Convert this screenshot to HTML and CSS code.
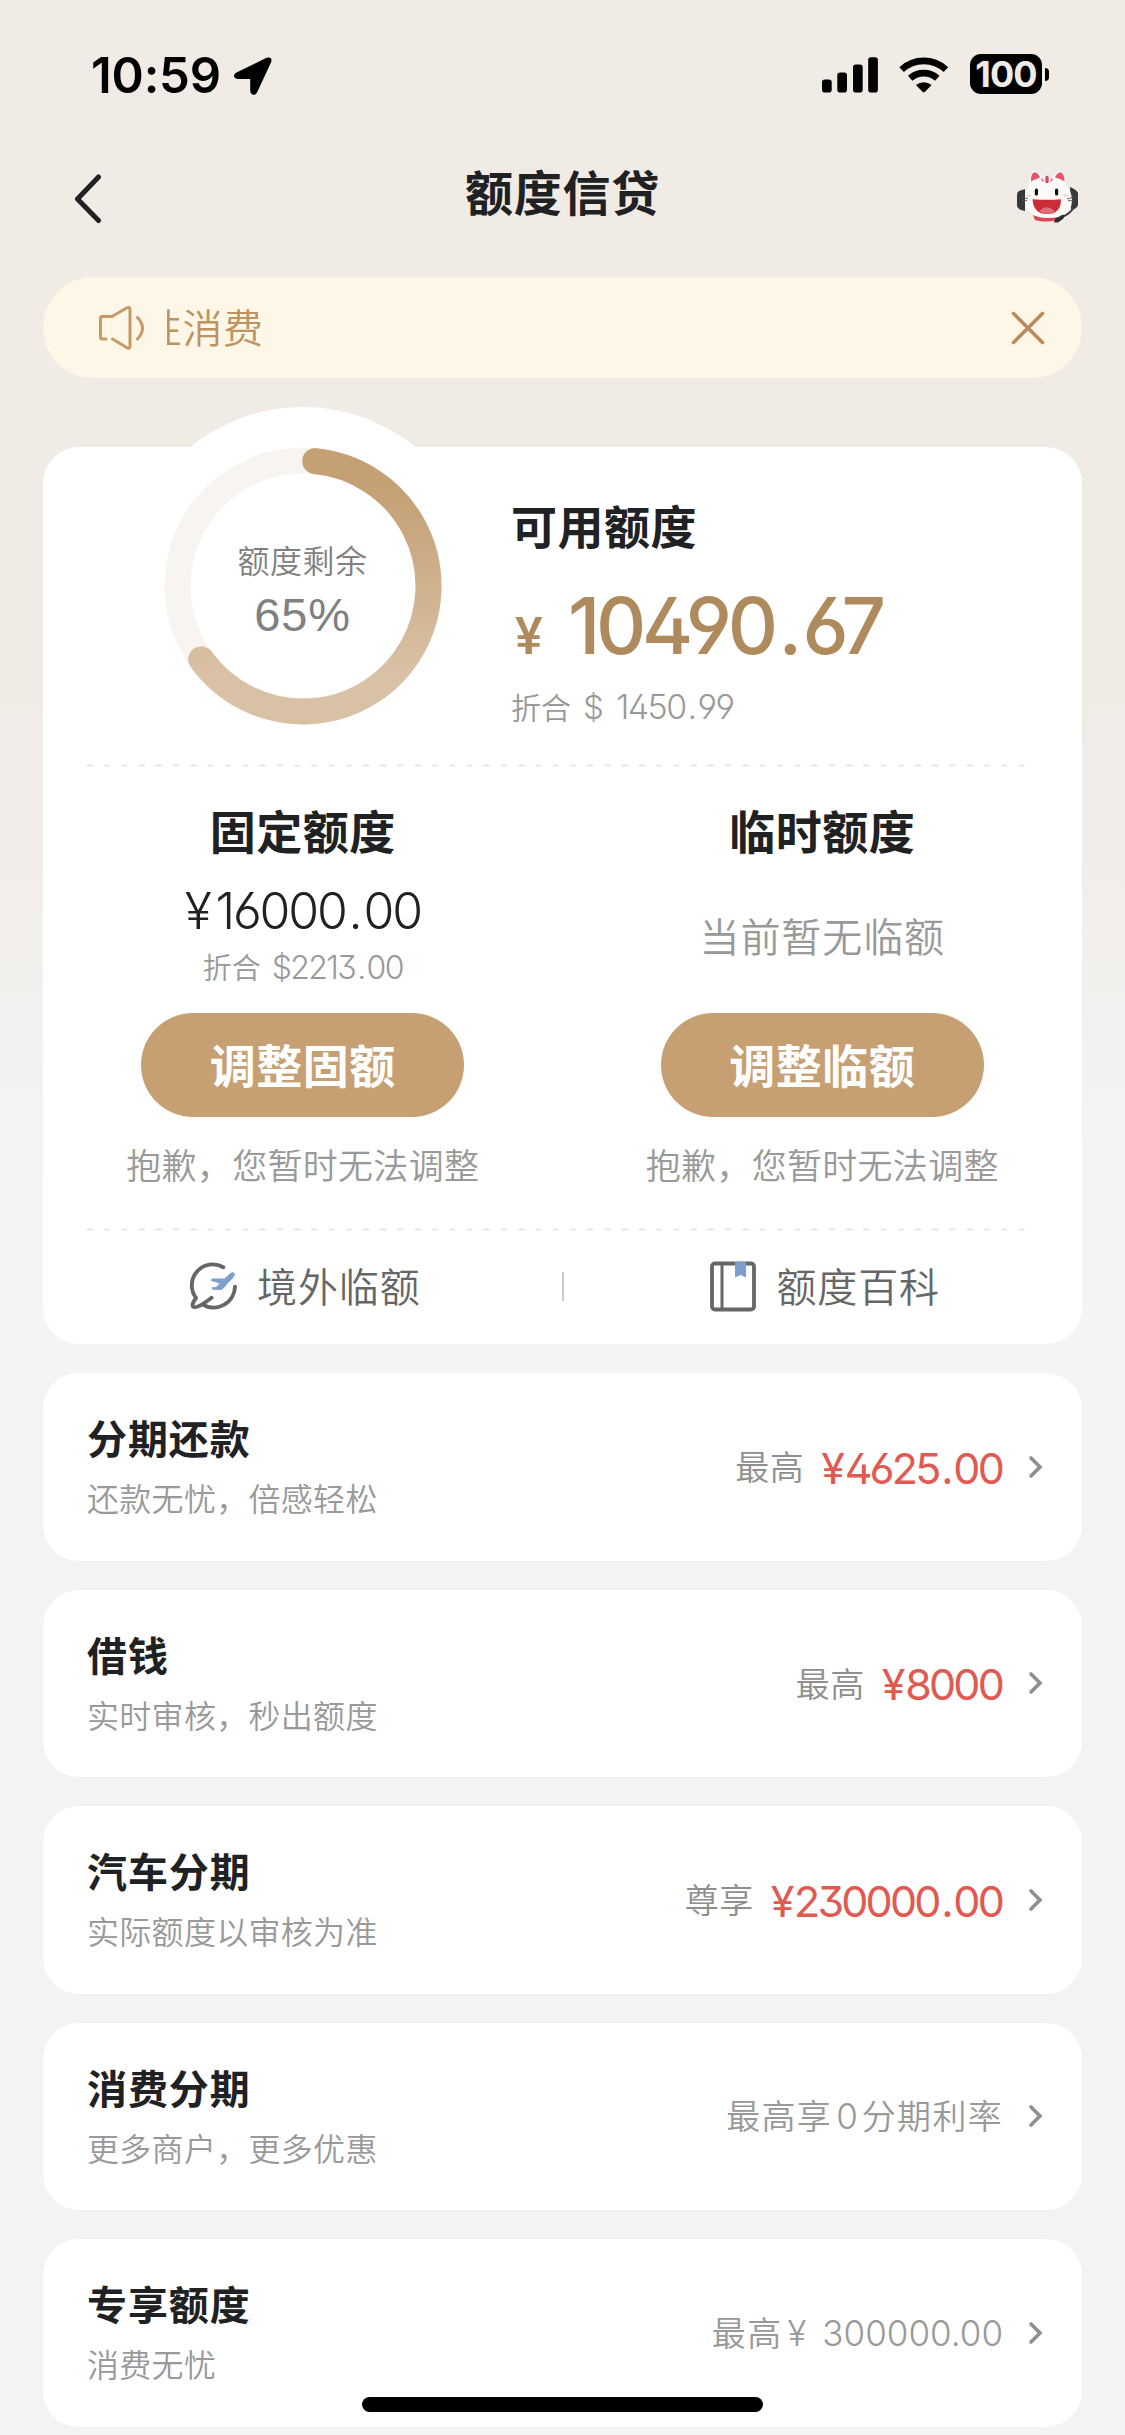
FILE: index.html
```html
<!DOCTYPE html>
<html lang="zh-CN">
<head>
<meta charset="utf-8">
<title>额度信贷</title>
<link rel="stylesheet" href="styles.css">
</head>
<body>
<div class="screen">
  <header class="status">
    <span class="clock">10:59</span>
    <svg class="locate" width="38" height="38" viewBox="0 0 38 38"><path d="M2.500 15.500 L32.500 0.800 Q38.500 -1 37.200 5 L23 35.500 Q21.300 38.500 18.500 37.500 Q16.200 36.500 16.200 33.500 L16.200 22 L4 22 Q0 21.500 0 18.800 Q0 16.800 2.500 15.500Z"/></svg>
    <svg class="signal" width="56" height="36" viewBox="0 0 56 36"><rect x="0" y="22.500" width="9.700" height="13" rx="2.800"/><rect x="15.300" y="15.500" width="9.700" height="20" rx="2.800"/><rect x="31" y="7.500" width="9.700" height="28" rx="2.800"/><rect x="46.200" y="0.300" width="9.700" height="35.200" rx="2.800"/></svg>
    <svg class="wifi" width="50" height="36" viewBox="0 0 50 36"><g fill="none" stroke="#000" stroke-width="6.600"><path d="M2.600 12.600 A32.500 32.500 0 0 1 46.900 12.600"/><path d="M11.200 21.200 A20.500 20.500 0 0 1 38.300 21.200"/></g><path d="M16.900 28 A12.200 12.200 0 0 1 32.600 28 L26 34.700 Q24.700 35.900 23.500 34.700Z"/></svg>
    <span class="battery">100</span>
    <i class="nub"></i>
  </header>

  <nav class="navbar">
    <svg class="back" width="28" height="50" viewBox="0 0 28 50"><path d="M24.500 3 L3.500 25 L24.500 46.500" fill="none" stroke="#202123" stroke-width="5" stroke-linecap="round" stroke-linejoin="round"/></svg>
    <h1>额度信贷</h1>
    <svg class="cat" width="62" height="54" viewBox="0 0 62 54">
      <path d="M8 18 L2 20 Q0 21 0 24 V35 Q1 39 8 40Z M53 16 Q60 19 61 22 V34 Q60 38 54 39Z" fill="#37393b"/>
      <path d="M57 36 Q53 43 45 46" fill="none" stroke="#37393b" stroke-width="1.800"/>
      <path d="M16 44 Q29 48 42 44 L40 49 Q29 52 18 49Z" fill="#df4455"/>
      <path d="M12 14 Q12 0 18 0 Q22 1 25 6 Q31 4.500 36 6 Q39 1 43 0 Q49 1 49 14 Q55 21 55 30 Q54 47 31 47 Q9 47 8 30 Q8 21 12 14Z" fill="#fcfaf9"/>
      <path d="M14 10.500 Q13.500 1.500 18 1.200 Q21 1.500 23 6.500 Q17.500 8.500 14 10.500Z M38 6.500 Q40 1.500 43.500 1.200 Q47.500 2 47.500 10.500 Q43 7.500 38 6.500Z" fill="#e5566b"/>
      <path d="M30 6.500 V10.500" stroke="#df4a5e" stroke-width="3.400" stroke-linecap="round"/>
      <path d="M24.800 8 L26.200 10 M35.200 8 L33.800 10" stroke="#e8798a" stroke-width="1.600" stroke-linecap="round"/>
      <rect x="17.800" y="17.500" width="3.200" height="7" rx="1.600" fill="#111"/><rect x="38" y="17.500" width="3.200" height="7" rx="1.600" fill="#111"/>
      <path d="M15.500 28.200 Q30 29.500 44 28.200 Q44 43 30 43 Q16.500 43 15.500 28.200Z" fill="#cb2d36"/>
      <path d="M22 40.500 Q29.500 32 38 40.500 Q30 45 22 40.500Z" fill="#df6f7a"/>
      <path d="M10 25 L14 24 M46.500 24 L51 25" stroke="#f7c9d0" stroke-width="1.800"/>
      <path d="M5 26 L11 28 M5 30 L10 29.500 M57 26 L50 28 M57 30 L51 29.500" stroke="#555" stroke-width="0.900"/>
      <path d="M38 48 L45 44 Q50 43 46 48 L41 51.500 L37 51.500Z" fill="#2c2d2f"/>
    </svg>
  </nav>

  <section class="notice">
    <svg class="horn" width="48" height="46" viewBox="0 0 48 46"><g fill="none" stroke="#c69a67" stroke-width="3" stroke-linecap="round" stroke-linejoin="round"><path d="M8 34 H4.500 Q2.500 34 2.500 32 V13.500 Q2.500 11.500 4.500 11.500 H14 L29 2.800 Q32 1.500 32 4.500 V41 Q32 44.500 29 42.800 L14.500 34"/><path d="M39.500 12.500 Q49.500 23 39.500 34"/></g></svg>
    <div class="ticker"><span>性消费</span></div>
    <svg class="close" width="36" height="36" viewBox="0 0 36 36"><path d="M3.500 3.500 L32.500 32.500 M32.500 3.500 L3.500 32.500" stroke="#b98b5c" stroke-width="3.600" stroke-linecap="round"/></svg>
  </section>

  <main class="quota">
    <i class="halo"></i>
    <div class="summary">
      <div class="gauge">
        <svg width="278" height="278" viewBox="0 0 278 278">
          <defs><linearGradient id="gold" gradientUnits="userSpaceOnUse" x1="0" y1="40" x2="0" y2="225"><stop offset="0" stop-color="#c4a074"/><stop offset="1" stop-color="#d9c1a5"/></linearGradient></defs>
          <circle cx="139" cy="139" r="125.500" fill="none" stroke="#f8f5f1" stroke-width="26"/>
          <path d="M151.200 14.100 A125.500 125.500 0 1 1 37.200 212.400" fill="none" stroke="url(#gold)" stroke-width="26" stroke-linecap="round"/>
        </svg>
        <div class="gauge-text"><span class="gauge-name">额度剩余</span><span class="gauge-value">65%</span></div>
      </div>
      <div class="available">
        <h2>可用额度</h2>
        <p class="total"><span class="yen">¥</span><span class="num">10490<em>.</em>67</span></p>
        <p class="usd"><span>折合</span><span class="dollar">$</span><span class="num">1450<em>.</em>99</span></p>
      </div>
    </div>
    <svg class="rule" width="942" height="3"><path d="M0 1.500 H942" stroke="#e6e6e6" stroke-width="2" stroke-dasharray="6 11.250"/></svg>
    <div class="columns">
      <div class="column">
        <h2>固定额度</h2>
        <p class="fixed num">¥<span>16000<em>.</em>00</span></p>
        <p class="fixed-usd"><span>折合</span><span class="num">$2213<em>.</em>00</span></p>
        <button>调整固额</button>
        <p class="sorry">抱歉，您暂时无法调整</p>
      </div>
      <div class="column">
        <h2>临时额度</h2>
        <p class="none">当前暂无临额</p>
        <button>调整临额</button>
        <p class="sorry">抱歉，您暂时无法调整</p>
      </div>
    </div>
    <svg class="rule" width="942" height="3"><path d="M0 1.500 H942" stroke="#e6e6e6" stroke-width="2" stroke-dasharray="6 11.250"/></svg>
    <div class="links">
      <a class="link">
        <svg width="48" height="50" viewBox="0 0 48 50"><g fill="none" stroke="#666" stroke-width="3.900" stroke-linecap="round" stroke-linejoin="round"><path d="M33.300 5.200 A21 21 0 0 0 6 36 Q1.500 42 3 44.500 Q6 48 21.500 35.800"/><path d="M45 24.700 A21.500 21.500 0 0 1 12.500 42.500"/></g><path d="M44.500 11 Q42.500 9.500 40 11.500 L34.500 16.500 H22 L20.500 18.500 L29.500 21.500 L26 25 L21.500 25.300 L22.500 27.800 L31 28 Q34 26.500 37.500 21.500 L43.500 15.500 Q45.500 13 44.500 11Z" fill="#7e9fcb"/></svg>
        <span>境外临额</span>
      </a>
      <i class="bar"></i>
      <a class="link">
        <svg width="47" height="51" viewBox="0 0 47 51"><rect x="2" y="2.500" width="42" height="46" rx="3" fill="none" stroke="#666" stroke-width="3.800"/><path d="M12 2.500 V48" stroke="#666" stroke-width="3"/><path d="M25 0.700 H36 V16.500 L30.500 14 L25 16.500Z" fill="#7e9fcb"/></svg>
        <span>额度百科</span>
      </a>
    </div>
  </main>

  <ul class="list">
    <li class="item"><div><h3>分期还款</h3><p>还款无忧，倍感轻松</p></div><span class="tag">最高</span><span class="price num">¥<span>4625<em>.</em>00</span></span><svg class="chev" width="16" height="26" viewBox="0 0 16 26"><path d="M3 4 L12 13 L3 22" fill="none" stroke="#8f8f8f" stroke-width="3.600" stroke-linecap="round"/></svg></li>
    <li class="item"><div><h3>借钱</h3><p>实时审核，秒出额度</p></div><span class="tag">最高</span><span class="price num">¥<span>8000</span></span><svg class="chev" width="16" height="26" viewBox="0 0 16 26"><path d="M3 4 L12 13 L3 22" fill="none" stroke="#8f8f8f" stroke-width="3.600" stroke-linecap="round"/></svg></li>
    <li class="item"><div><h3>汽车分期</h3><p>实际额度以审核为准</p></div><span class="tag">尊享</span><span class="price num">¥<span>230000<em>.</em>00</span></span><svg class="chev" width="16" height="26" viewBox="0 0 16 26"><path d="M3 4 L12 13 L3 22" fill="none" stroke="#8f8f8f" stroke-width="3.600" stroke-linecap="round"/></svg></li>
    <li class="item"><div><h3>消费分期</h3><p>更多商户，更多优惠</p></div><span class="plain">最高享<b>0</b>分期利率</span><svg class="chev" width="16" height="26" viewBox="0 0 16 26"><path d="M3 4 L12 13 L3 22" fill="none" stroke="#8f8f8f" stroke-width="3.600" stroke-linecap="round"/></svg></li>
    <li class="item"><div><h3>专享额度</h3><p>消费无忧</p></div><span class="plain">最高<b class="cny">¥</b><b class="amount">300000.00</b></span><svg class="chev" width="16" height="26" viewBox="0 0 16 26"><path d="M3 4 L12 13 L3 22" fill="none" stroke="#8f8f8f" stroke-width="3.600" stroke-linecap="round"/></svg></li>
  </ul>
  <i class="home"></i>
</div>
</body>
</html>
```
FILE: styles.css
```css
* { box-sizing: border-box; margin: 0; padding: 0; }
body { background: #f2f3f5; font-family: "Noto Sans CJK SC", sans-serif; color: #202123; }
i, em { font-style: normal; }
i { display: block; }
svg { display: block; flex: none; }
.screen {
  position: relative; width: 1125px; height: 2435px; overflow: hidden;
  background: linear-gradient(#f0ebe5 0, #f0ebe5 700px, #f4f4f4 1180px, #f4f4f4 1373px, #f2f3f5 1373px);
}
.num { font-family: Inter, "Noto Sans CJK SC", sans-serif; font-feature-settings: "ss01"; white-space: nowrap; }
.num em { margin: 0 0.060em; }

.status { height: 150px; padding: 54px 76px 0 91px; display: flex; align-items: flex-start; }
.clock { font: 600 49px/43px Inter, sans-serif; letter-spacing: -0.2px; color: #000; width: 143px; white-space: nowrap; }
.locate { margin-top: 3px; }
.signal { margin: 3px 21px 0 auto; }
.wifi { margin: 3px 21px 0 0; }
.battery { width: 72px; height: 40px; border-radius: 11px; background: #000; color: #f0ebe5; font: 700 36px/41px Inter, sans-serif; letter-spacing: -0.8px; text-align: center; }
.nub { width: 4px; height: 13px; margin: 14px 0 0 3px; border-radius: 0 6px 6px 0; background: #000; }

.navbar { height: 127px; padding: 0 46px 0 74px; display: flex; justify-content: space-between; align-items: flex-start; }
.navbar h1 { font-size: 48px; font-weight: 600; line-height: 80px; letter-spacing: 0.8px; margin: 0 0 0 6px; }
.back { margin-top: 24px; }
.cat { margin-top: 21px; }

.notice { height: 101px; margin: 0 43px; padding: 0 36px 0 55px; border-radius: 51px; background: #fef7e8; display: flex; align-items: center; }
.ticker { width: 800px; margin: -3px 0 0 21px; overflow: hidden; color: #bd9362; font-size: 40px; font-weight: 350; line-height: 60px; letter-spacing: 0.5px; white-space: nowrap; }
.ticker span { margin-left: -25px; }
.close { margin-left: auto; }

.quota { position: relative; height: 897px; margin: 69px 43px 0; border-radius: 36px; background: #fff; }
.halo { position: absolute; left: 81px; top: -40px; width: 358px; height: 358px; border-radius: 50%; background: #fff; }
.summary { position: relative; height: 317px; display: flex; }
.gauge { width: 278px; height: 278px; margin: -0.500px 0 0 120.500px; display: grid; }
.gauge > * { grid-area: 1 / 1; }
.gauge-text { display: flex; flex-direction: column; align-items: center; padding-top: 89px; color: #808080; }
.gauge-name { font-size: 32px; font-weight: 350; line-height: 46px; letter-spacing: 0.5px; }
.gauge-value { font: 400 47px/52px "Liberation Sans", sans-serif; letter-spacing: 0.8px; margin-top: 7px; }
.available { margin: 42px 0 0 69.500px; }
h2 { font-size: 46px; font-weight: 600; line-height: 70px; letter-spacing: 0.5px; }
.total { display: flex; align-items: baseline; height: 100px; margin-top: 22px; color: #ae8a5c; line-height: 90px; }
.total .yen { font: 500 52px/90px Roboto, sans-serif; width: 57px; padding-left: 4px; }
.total .num { font-size: 78px; font-weight: 500; letter-spacing: -4.300px; }
.usd { display: flex; align-items: baseline; color: #999; line-height: 50px; font-size: 30px; font-weight: 350; }
.usd .dollar { font-family: Inter, sans-serif; font-size: 33px; width: 33px; margin-left: 12px; }
.usd .num { font-size: 34px; letter-spacing: -1.600px; }
.rule { margin: 0 0 0 44px; }

.columns { display: grid; grid-template-columns: 1fr 1fr; height: 461px; }
.column { display: flex; flex-direction: column; align-items: center; padding-top: 27px; white-space: nowrap; }
.fixed { font-size: 50px; line-height: 60px; margin-top: 17px; letter-spacing: -2.200px; font-weight: 350; }
.fixed > span { margin-left: 6px; }
.fixed-usd { display: flex; gap: 11px; align-items: baseline; font-size: 29px; line-height: 40px; height: 41px; margin-top: 5px; color: #999; font-weight: 350; }
.fixed-usd .num { font-size: 32px; letter-spacing: -1.600px; }
.none { font-size: 40px; font-weight: 350; line-height: 60px; letter-spacing: 0.9px; color: #999; margin-top: 41px; height: 82px; }
button { width: 323px; height: 104px; margin-top: 26px; padding-bottom: 4px; border: 0; border-radius: 52px; background: #c6a073; color: #fff; font: 600 46px/100px "Noto Sans CJK SC", sans-serif; letter-spacing: 0.5px; }
.sorry { font-size: 35px; font-weight: 350; line-height: 50px; letter-spacing: 0.3px; color: #999; margin-top: 22px; }
.links { display: flex; height: 111px; align-items: center; justify-content: space-between; padding: 0 142px 0 147px; color: #666; }
.link { display: flex; align-items: center; gap: 19px; font-size: 40px; font-weight: 350; line-height: 60px; letter-spacing: 0.9px; }
.link span { margin-top: -3px; }
.bar { width: 2px; height: 29px; margin-right: 5px; background: #ccc; }

.list { list-style: none; margin: 29px 43px 0; display: grid; gap: 29px; }
.item { height: 187.500px; padding: 0 38px 0 44px; border-radius: 36px; background: #fff; display: flex; align-items: center; white-space: nowrap; }
.item > div { flex: 1; margin-top: -5px; }
h3 { font-size: 40px; font-weight: 600; line-height: 60px; letter-spacing: 0.9px; }
.item p { font-size: 32px; font-weight: 350; line-height: 48px; color: #999; letter-spacing: 0.3px; margin-top: 6px; }
.tag { font-size: 34px; font-weight: 350; line-height: 50px; color: #8f8f8f; margin-top: -1px; letter-spacing: 0.5px; }
.price { font-size: 43px; line-height: 50px; color: #e05a52; letter-spacing: -2.800px; margin: 2px 1px 0 17px; }
.price > span { margin-left: 2.500px; }
.chev { margin-left: 25px; }
.plain { font-size: 34px; font-weight: 350; line-height: 50px; color: #999; letter-spacing: 1.300px; margin-top: -1px; }
.plain b { font: 300 35px/50px Inter, sans-serif; letter-spacing: 0; margin: 0 4px; }
.plain .cny { margin: 0 12px 0 5px; }
.plain .amount { margin-right: 0; }
.home { position: absolute; left: 362px; top: 2397px; width: 401px; height: 15px; border-radius: 8px; background: #000; }
```
